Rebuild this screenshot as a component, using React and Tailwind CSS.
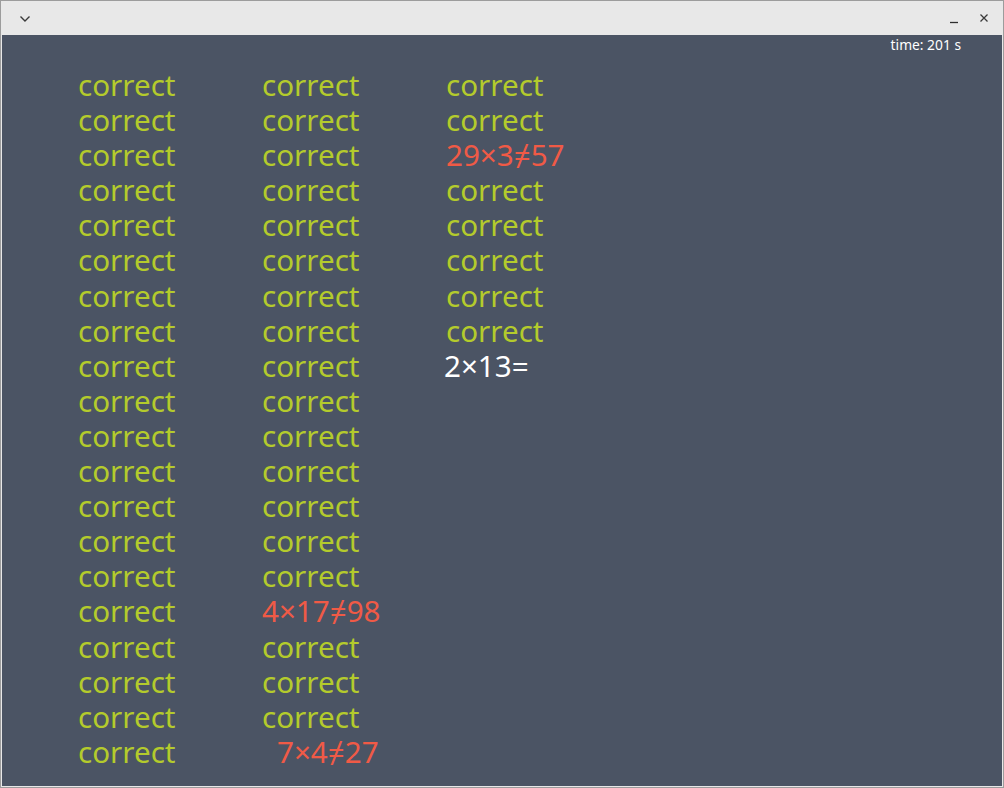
import React from "react";

const G = "correct";
const col1 = Array.from({ length: 20 }, () => ({ t: G, c: "g" }));
const col2 = Array.from({ length: 20 }, (_, i) => {
  if (i === 15) return { t: "4×17≠98", c: "r" };
  if (i === 19) return { t: "7×4≠27", c: "r", pad: true };
  return { t: G, c: "g" };
});
const col3 = [
  { t: G, c: "g" },
  { t: G, c: "g" },
  { t: "29×3≠57", c: "r" },
  { t: G, c: "g" },
  { t: G, c: "g" },
  { t: G, c: "g" },
  { t: G, c: "g" },
  { t: G, c: "g" },
  { t: "2×13=", c: "w", shift: true },
];

function Cell({ item }) {
  const color =
    item.c === "g" ? "text-[#b4cb2c]" : item.c === "r" ? "text-[#f05a46]" : "text-white";
  return (
    <div
      className={`${color} h-[35.1px] leading-[35.1px] whitespace-pre ${item.pad ? "pl-[15px]" : ""} ${item.shift ? "-ml-[2px]" : ""}`}
    >
      {item.t}
    </div>
  );
}

function Col({ items }) {
  return (
    <div className="w-[184px] flex flex-col">
      {items.map((it, i) => (
        <Cell key={i} item={it} />
      ))}
    </div>
  );
}

export default function App() {
  return (
    <div
      className="w-[1004px] h-[788px] flex flex-col border border-[#9c9c9c] bg-[#e8e8e8] overflow-hidden"
      style={{ fontFamily: '"Noto Sans", "Open Sans", sans-serif' }}
    >
      <div className="h-[34px] shrink-0 flex items-center justify-between pl-[18px] pr-[14px]">
        <svg width="12" height="8" viewBox="0 0 12 8" className="mt-[1px]">
          <path d="M1.5 1.5 L6 6 L10.5 1.5" stroke="#3a3a3a" strokeWidth="1.4" fill="none" />
        </svg>
        <div className="flex items-center gap-[20px]">
          <svg width="10" height="10" viewBox="0 0 10 10" className="mt-[1px]">
            <path d="M1 8.5 H9" stroke="#2e2e2e" strokeWidth="1.3" />
          </svg>
          <svg width="10" height="10" viewBox="0 0 10 10">
            <path d="M1.5 1.5 L8.5 8.5 M8.5 1.5 L1.5 8.5" stroke="#3a3a3a" strokeWidth="1.3" />
          </svg>
        </div>
      </div>
      <div className="flex-1 mx-[1px] mb-[1px] bg-[#4b5464] flex flex-col pt-[2px]">
        <div className="h-[16px] flex justify-end pr-[41px] text-[13.8px] leading-[16px] text-white">
          time: 201 s
        </div>
        <div className="flex pl-[76px] mt-[14px] text-[29.6px]">
          <Col items={col1} />
          <Col items={col2} />
          <Col items={col3} />
        </div>
      </div>
    </div>
  );
}
